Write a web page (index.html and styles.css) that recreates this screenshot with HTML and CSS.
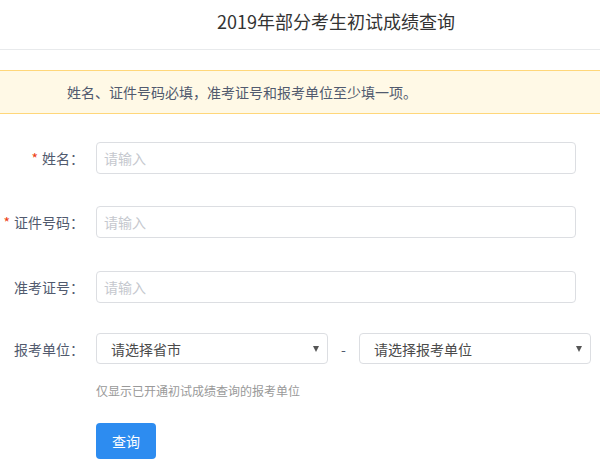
FILE: index.html
```html
<!DOCTYPE html>
<html lang="zh-CN">
<head>
<meta charset="utf-8">
<title>2019年部分考生初试成绩查询</title>
<link rel="stylesheet" href="styles.css">
</head>
<body>
<header class="header">
  <h1 class="title">2019年部分考生初试成绩查询</h1>
</header>
<div class="alert">姓名、证件号码必填，准考证号和报考单位至少填一项。</div>
<form class="form">
  <div class="row">
    <label class="label"><span class="star">*</span>姓名：</label>
    <input class="input" type="text" placeholder="请输入">
  </div>
  <div class="row">
    <label class="label"><span class="star">*</span>证件号码：</label>
    <input class="input" type="text" placeholder="请输入">
  </div>
  <div class="row">
    <label class="label">准考证号：</label>
    <input class="input" type="text" placeholder="请输入">
  </div>
  <div class="row row-select">
    <label class="label">报考单位：</label>
    <div class="selects">
      <div class="select"><span>请选择省市</span><i class="caret"></i></div>
      <span class="dash">-</span>
      <div class="select"><span>请选择报考单位</span><i class="caret"></i></div>
    </div>
  </div>
  <div class="help">仅显示已开通初试成绩查询的报考单位</div>
  <div class="actions"><button class="btn" type="button">查询</button></div>
</form>
</body>
</html>
```
FILE: styles.css
```css
* { box-sizing: border-box; }
html, body { margin: 0; padding: 0; background: #fff; }
body {
  font-family: "Noto Sans CJK SC", "Liberation Sans", sans-serif;
  color: #515a6e;
  font-size: 14px;
}
.header {
  height: 50px;
  border-bottom: 1px solid #e8eaec;
  display: flex;
  align-items: center;
  justify-content: center;
  padding-left: 72px;
  padding-bottom: 8px;
}
.title {
  margin: 0;
  font-size: 18px;
  font-weight: normal;
  color: #333;
  line-height: 24px;
}
.alert {
  margin-top: 20px;
  height: 44px;
  background: #fff9e6;
  border-top: 1px solid #ffd77a;
  border-bottom: 1px solid #ffd77a;
  padding-left: 67px;
  display: flex;
  align-items: center;
  color: #515a6e;
  font-size: 14px;
}
.form {
  padding-top: 28px;
}
.row {
  display: flex;
  align-items: center;
  margin-bottom: 32px;
}
.row:nth-child(2) { margin-bottom: 33px; }
.row:nth-child(3) { margin-bottom: 30px; }
.row-select { margin-bottom: 18px; }
.label {
  width: 84px;
  flex: none;
  margin-right: 12px;
  text-align: right;
  color: #515a6e;
  font-size: 14px;
}
.star {
  color: #ed4014;
  margin-right: 4px;
}
.input {
  width: 480px;
  height: 32px;
  border: 1px solid #dcdee2;
  border-radius: 4px;
  padding: 0 7px;
  font-family: inherit;
  font-size: 14px;
  color: #515a6e;
  outline: none;
}
.input::placeholder { color: #c5c8ce; }
.selects {
  display: flex;
  align-items: center;
}
.select {
  width: 232px;
  height: 31px;
  border: 1px solid #dcdee2;
  border-radius: 4px;
  padding: 0 8px 0 14px;
  display: flex;
  align-items: center;
  justify-content: space-between;
  color: #4a4a4a;
  font-size: 14px;
}
.caret {
  width: 0;
  height: 0;
  border-left: 3.5px solid transparent;
  border-right: 3.5px solid transparent;
  border-top: 6px solid #555;
}
.dash {
  width: 31px;
  text-align: center;
  color: #515a6e;
}
.help {
  margin-left: 96px;
  font-size: 12px;
  color: #999;
  line-height: 18px;
}
.actions {
  margin-left: 96px;
  margin-top: 23px;
}
.btn {
  width: 60px;
  height: 36px;
  background: #2d8cf0;
  border: none;
  border-radius: 4px;
  color: #fff;
  font-family: inherit;
  font-size: 14px;
  padding: 0;
}
```
